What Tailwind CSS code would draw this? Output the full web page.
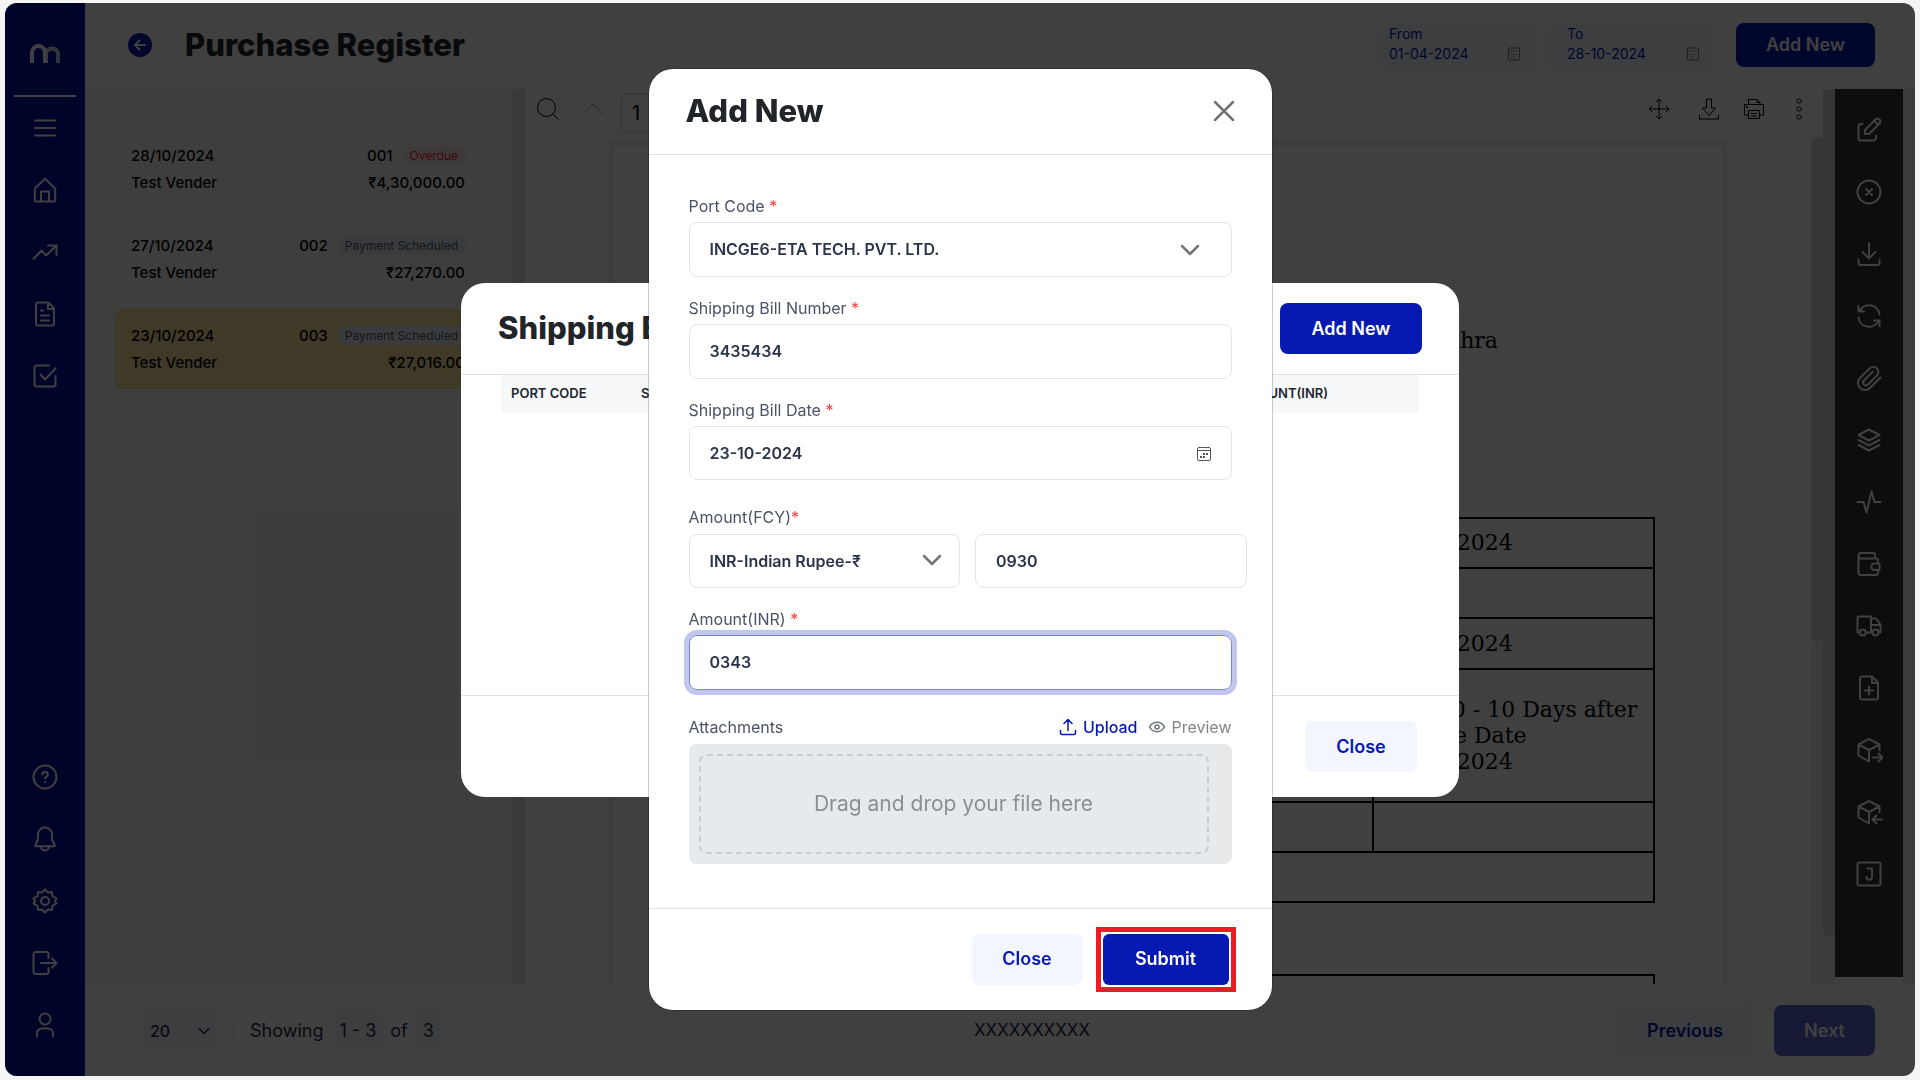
<!DOCTYPE html>
<html lang="en">
  <head>
    <meta charset="UTF-8" />
    <meta name="viewport" content="width=device-width, initial-scale=1.0" />
    <title>Purchase Register</title>
    <script src="https://cdn.jsdelivr.net/npm/@tailwindcss/browser@4"></script>
  </head>
  <body class="h-screen overflow-hidden bg-[#f5f5f6] px-[5px] pt-[3px] pb-1 font-['Inter',sans-serif] text-[#212529]">
    <!-- App -->
    <div class="relative flex h-full overflow-hidden rounded-xl bg-white">
      <!-- Left navigation -->
      <nav class="flex w-20 shrink-0 flex-col items-center bg-[#0010a0] pb-5 text-white">
        <a href="#" aria-label="Dashboard" class="flex h-[92px] items-center pt-2">
          <svg class="h-5 w-8" viewBox="0 0 32 20" fill="none" stroke-width="4">
            <path stroke="#c4d2e8" d="M17 20V9.5a6.5 6.5 0 0 1 12 0V20" />
            <path stroke="currentColor" d="M3 20V9.5a6.5 6.5 0 0 1 13 0V20" />
          </svg>
        </a>
        <div class="h-0.5 w-[62px] shrink-0 bg-white"></div>
        <a href="#" aria-label="Menu" class="flex h-[62px] items-center">
          <svg class="size-7" viewBox="0 0 28 28" fill="none" stroke="currentColor" stroke-width="2" stroke-linecap="round"><path d="M4 6.500h20M4 14h20M4 21.500h20" /></svg>
        </a>
        <a href="#" aria-label="Home" class="flex h-[62px] items-center">
          <svg class="size-7" viewBox="0 0 28 28" fill="none" stroke="currentColor" stroke-width="2" stroke-linecap="round" stroke-linejoin="round"><path d="M3.800 12.500 14 2.800l10.200 9.700V24a1.500 1.500 0 0 1-1.500 1.500H5.300A1.500 1.500 0 0 1 3.800 24Z" /><path d="M10 25v-9.500h8V25" /></svg>
        </a>
        <a href="#" aria-label="Sales" class="flex h-[62px] items-center">
          <svg class="size-7" viewBox="0 0 28 28" fill="none" stroke="currentColor" stroke-width="2" stroke-linecap="round" stroke-linejoin="round"><path d="m2.500 21 8-8.500 4.500 5L25.500 7.500M17 7.500h8.500V17" /></svg>
        </a>
        <a href="#" aria-label="Documents" class="flex h-[62px] items-center">
          <svg class="size-7" viewBox="0 0 28 28" fill="none" stroke="currentColor" stroke-width="2" stroke-linecap="round" stroke-linejoin="round"><path d="M17.500 2.500H7A2 2 0 0 0 5 4.500v19a2 2 0 0 0 2 2h14a2 2 0 0 0 2-2V8.500ZM17 3v6h6M10 10.500h2M10 15.500h8M10 20.500h8" /></svg>
        </a>
        <a href="#" aria-label="Tasks" class="flex h-[62px] items-center">
          <svg class="size-7" viewBox="0 0 28 28" fill="none" stroke="currentColor" stroke-width="2" stroke-linecap="round" stroke-linejoin="round"><path d="M18 3.500H5.500a2 2 0 0 0-2 2v17a2 2 0 0 0 2 2h17a2 2 0 0 0 2-2V14M9.500 12.500l4.500 5L24.500 6.500" /></svg>
        </a>
        <a href="#" aria-label="Help" class="mt-auto flex h-[62px] items-center">
          <svg class="size-7" viewBox="0 0 28 28" fill="none" stroke="currentColor" stroke-width="2" stroke-linecap="round" stroke-linejoin="round"><circle cx="14" cy="14" r="11.500" /><path d="M11.300 11.500c.2-3.400 5.600-3.200 5.500.2 0 2-2.600 1.900-2.700 4M14 19v.3" /></svg>
        </a>
        <a href="#" aria-label="Notifications" class="flex h-[62px] items-center">
          <svg class="size-7" viewBox="0 0 28 28" fill="none" stroke="currentColor" stroke-width="2" stroke-linecap="round" stroke-linejoin="round"><path d="M14 2.500a7 7 0 0 0-7 7.200v5.100l-2.800 5.400c-.3.600 0 1 .6 1h18.400c.6 0 .9-.4.600-1L21 14.800V9.700a7 7 0 0 0-7-7.200ZM10 21.500a4 4 0 0 0 8 0" /></svg>
        </a>
        <a href="#" aria-label="Settings" class="flex h-[62px] items-center">
          <svg class="size-7" viewBox="0 0 28 28" fill="none" stroke="currentColor" stroke-width="2" stroke-linejoin="round"><path d="m14 2.500 2.900 3 4.100-.500.500 4.100 4 2.400-1.700 2.500 1.700 2.500-4 2.400-.5 4.100-4.100-.5-2.900 3-2.900-3-4.100.5-.5-4.100-4-2.400L4.200 14l-1.700-2.500 4-2.400.5-4.100 4.100.5Z" /><circle cx="14" cy="14" r="4" /></svg>
        </a>
        <a href="#" aria-label="Log out" class="flex h-[62px] items-center">
          <svg class="size-7" viewBox="0 0 28 28" fill="none" stroke="currentColor" stroke-width="2" stroke-linecap="round" stroke-linejoin="round"><path d="M17.500 9V5a2 2 0 0 0-2-2h-11a2 2 0 0 0-2 2v18a2 2 0 0 0 2 2h11a2 2 0 0 0 2-2v-4M10 14h15.500M21 9.500l4.500 4.500-4.500 4.500" /></svg>
        </a>
        <a href="#" aria-label="Profile" class="flex h-[62px] items-center">
          <svg class="size-7" viewBox="0 0 28 28" fill="none" stroke="currentColor" stroke-width="2" stroke-linecap="round"><circle cx="14" cy="8" r="5.500" /><path d="M6 25.500v-3a5 5 0 0 1 5-5h6a5 5 0 0 1 5 5v3" /></svg>
        </a>
      </nav>

      <div class="flex min-w-0 flex-1 flex-col">
        <!-- Header -->
        <header class="flex h-[86px] shrink-0 items-center pr-10 pb-0.5 pl-[43px]">
          <button aria-label="Back" class="flex size-6 items-center justify-center rounded-full bg-[#0619b1] text-white">
            <svg class="size-4" viewBox="0 0 16 16" fill="none" stroke="currentColor" stroke-width="2" stroke-linecap="round" stroke-linejoin="round"><path d="M13 8H3m4.500-4.500L3 8l4.500 4.500" /></svg>
          </button>
          <div class="ml-3 h-5 w-px bg-[#f0f0f0]"></div>
          <h1 class="ml-5 text-[31px] font-extrabold">Purchase Register</h1>
          <div class="ml-auto flex items-center">
            <label class="flex h-[42px] w-[158px] flex-col justify-center rounded bg-[#f4f7ff] pr-4 pb-0.5 pl-[10px] text-sm leading-5 text-[#0619b1]">
              From
              <span class="flex items-center justify-between">
                <input value="01-04-2024" class="w-24" />
                <svg class="size-3.5 text-neutral-500" viewBox="0 0 14 14" fill="none" stroke="currentColor"><rect x="1.500" y="1" width="11" height="12" rx="1" /><path d="M1.500 4h11M4 7.500h6M4 10h4" stroke-dasharray="1.500 1" /></svg>
              </span>
            </label>
            <label class="ml-2.5 flex h-[42px] w-[169px] flex-col justify-center rounded bg-[#f4f7ff] pr-4 pb-0.5 pl-5 text-sm leading-5 text-[#0619b1]">
              To
              <span class="flex items-center justify-between">
                <input value="28-10-2024" class="w-24" />
                <svg class="size-3.5 text-neutral-500" viewBox="0 0 14 14" fill="none" stroke="currentColor"><rect x="1.500" y="1" width="11" height="12" rx="1" /><path d="M1.500 4h11M4 7.500h6M4 10h4" stroke-dasharray="1.500 1" /></svg>
              </span>
            </label>
            <button class="ml-5 h-11 w-[139px] rounded-lg bg-[#0619b1] text-lg font-semibold text-white">Add New</button>
          </div>
        </header>

        <div class="flex min-h-0 flex-1">
          <!-- Purchase list -->
          <aside class="w-[427px] shrink-0 bg-[#f5f5fb] pt-[35px] pl-[30px] text-[15px] font-medium text-black">
            <ul class="w-[366px]">
              <li class="h-[90px] border-b border-[#efeff3] px-4 pt-[18px] leading-[27px]">
                <div class="flex items-center"><span>28/10/2024</span><span class="ml-auto">001</span><span class="ml-2.5 rounded-lg bg-[#fbe6e6] px-[7px] text-xs leading-[19px] font-normal text-[#ff1d1d]">Overdue</span></div>
                <div class="flex justify-between"><span>Test Vender</span><span>₹4,30,000.00</span></div>
              </li>
              <li class="h-[90px] border-b border-[#efeff3] px-4 pt-[18px] leading-[27px]">
                <div class="flex items-center"><span>27/10/2024</span><span class="ml-auto">002</span><span class="ml-2.5 rounded-lg bg-[#e4ebf0] px-[7px] text-xs leading-[19px] font-normal text-[#4f5b70]">Payment Scheduled</span></div>
                <div class="flex justify-between"><span>Test Vender</span><span>₹27,270.00</span></div>
              </li>
              <li class="h-[90px] border-b border-[#efeff3] py-1 leading-[27px]">
                <div class="h-[81px] rounded-lg bg-[#f9e29c] px-4 pt-3.5">
                  <div class="flex items-center"><span>23/10/2024</span><span class="ml-auto">003</span><span class="ml-2.5 rounded-lg bg-[#e4ebf0] px-[7px] text-xs leading-[19px] font-normal text-[#4f5b70]">Payment Scheduled</span></div>
                  <div class="flex justify-between"><span>Test Vender</span><span>₹27,016.00</span></div>
                </div>
              </li>
            </ul>
          </aside>
          <div class="w-[13px] shrink-0 bg-[#e8e8e8]"></div>

          <!-- Document viewer -->
          <main class="flex min-w-0 flex-1 flex-col overflow-hidden">
            <div class="flex h-12 shrink-0 items-center pl-[11px] text-black">
              <svg class="mb-2 size-6" viewBox="0 0 24 24" fill="none" stroke="currentColor"><circle cx="10.500" cy="10.500" r="9" /><path d="m17 17 5.500 5.500" /></svg>
              <svg class="mb-2 ml-[21px] size-6 text-neutral-400" viewBox="0 0 24 24" fill="none" stroke="currentColor"><path d="m2 17 10-10 10 10" /></svg>
              <input aria-label="Page" value="1" class="ml-4 h-10 w-14 rounded border border-neutral-300 px-2.5 text-xl" />
              <div class="mb-2 ml-auto flex items-center">
                <svg class="size-6" viewBox="0 0 24 24" fill="none" stroke="currentColor"><path d="M12 2v20M2 12h20M9 5l3-3 3 3M9 19l3 3 3-3M5 9l-3 3 3 3M19 9l3 3-3 3" /></svg>
                <svg class="ml-[26px] size-6" viewBox="0 0 24 24" fill="none" stroke="currentColor"><path d="M2.500 18v4h19v-4M9.500 2h5v9h4L12 18.500 5.500 11h4Z" /></svg>
                <svg class="ml-[21px] size-6" viewBox="0 0 24 24" fill="none" stroke="currentColor"><path d="M6.500 7.500v-5H15l3 3v2M6.500 18h-4V7.500h19V18h-4M6.500 13.500h11v8h-11ZM9 16.500h6M9 19h6M15 2.500v3h3" /><path fill="currentColor" d="M4.500 9.500h1v1h-1z" /></svg>
                <svg class="ml-[21px] size-6" viewBox="0 0 24 24" fill="none" stroke="currentColor"><rect x="10" y="2" width="4" height="4" rx="1.500" /><rect x="10" y="10" width="4" height="4" rx="1.500" /><rect x="10" y="18" width="4" height="4" rx="1.500" /></svg>
              </div>
            </div>
            <div class="flex min-h-0 flex-1 overflow-hidden pt-2">
              <div class="mr-[88px] ml-[88px] flex-1 px-[68px] pt-[183px] font-['DejaVu_Serif',serif] text-[22px] leading-[26px] text-black shadow-[0_0_5px_3px_rgba(0,0,0,0.12)]">
                <p class="pr-[157px] text-right">Andhra</p>
                <table class="mt-[163px] w-full table-fixed border-collapse border-2 border-black">
                  <colgroup><col /><col class="w-[281px]" /></colgroup>
                  <tr class="h-[50px] border-b-2"><td></td><td class="border-l-2 px-3">23-10-2024</td></tr>
                  <tr class="h-[50px] border-b-2"><td></td><td class="border-l-2"></td></tr>
                  <tr class="h-[51px] border-b-2"><td></td><td class="border-l-2 px-3">23-10-2024</td></tr>
                  <tr class="h-[133px] border-b-2"><td></td><td class="border-l-2 px-3 whitespace-nowrap">Due 30 - 10 Days after<br />Invoice Date<br />23-10-2024</td></tr>
                  <tr class="h-[50px] border-b-2"><td></td><td class="border-l-2"></td></tr>
                  <tr class="h-[50px]"><td colspan="2"></td></tr>
                </table>
                <div class="mt-[71px] h-20 border-2 border-black"></div>
              </div>
            </div>
          </main>

          <!-- Scroll tracks -->
          <div class="w-3 shrink-0 pt-12"><div class="h-full bg-[#f0f0f0]"><div class="h-[505px] rounded-full bg-[#d8d8d8]"></div></div></div>
          <div class="w-3 shrink-0 bg-[#efefef]"><div class="h-[848px] rounded-full bg-[#d4d4d4]"></div></div>

          <!-- Document actions -->
          <div class="mb-[7px] flex w-[68px] shrink-0 flex-col items-center bg-[#303438] pt-[10px] text-white">
            <button aria-label="Edit" class="flex h-[62px] items-center"><svg class="size-7" viewBox="0 0 28 28" fill="none" stroke="currentColor" stroke-width="2" stroke-linecap="round" stroke-linejoin="round"><path d="M7.500 8H6a2.500 2.500 0 0 0-2.500 2.500V22A2.500 2.500 0 0 0 6 24.500h12.500A2.500 2.500 0 0 0 21 22v-2.500M10 14 20.500 3.500a2.500 2.500 0 0 1 4 4L14 18H10ZM19.500 5l3.500 3.500" /></svg></button>
            <button aria-label="Cancel" class="flex h-[62px] items-center"><svg class="size-7" viewBox="0 0 28 28" fill="none" stroke="currentColor" stroke-width="2" stroke-linecap="round"><circle cx="14" cy="14" r="11.500" /><path d="m11 11 6 6m0-6-6 6" /></svg></button>
            <button aria-label="Download" class="flex h-[62px] items-center"><svg class="size-7" viewBox="0 0 28 28" fill="none" stroke="currentColor" stroke-width="2" stroke-linecap="round" stroke-linejoin="round"><path d="M14 3v15.500M7.500 12l6.500 6.500 6.500-6.500M3.500 19.500V23a2 2 0 0 0 2 2h17a2 2 0 0 0 2-2v-3.500" /></svg></button>
            <button aria-label="Refresh" class="flex h-[62px] items-center"><svg class="size-7" viewBox="0 0 28 28" fill="none" stroke="currentColor" stroke-width="2" stroke-linecap="round" stroke-linejoin="round"><path d="M24.500 12.500A10.500 10.500 0 0 0 5 8.500M3.500 4v5.500H9M3.500 15.500A10.500 10.500 0 0 0 23 19.500M24.500 24v-5.500H19" /></svg></button>
            <button aria-label="Attach" class="flex h-[62px] items-center"><svg class="size-7" viewBox="0 0 28 28" fill="none" stroke="currentColor" stroke-width="2" stroke-linecap="round" stroke-linejoin="round"><path d="M25.500 13.500 15 24a7 7 0 0 1-10-10L14.500 4.500a5 5 0 0 1 7.500 7L13 20.500a2.700 2.700 0 0 1-4-4l8.500-8.500" /></svg></button>
            <button aria-label="Layers" class="flex h-[62px] items-center"><svg class="size-7" viewBox="0 0 28 28" fill="none" stroke="currentColor" stroke-width="2" stroke-linecap="round" stroke-linejoin="round"><path d="m14 3.500 10.500 5.500L14 14.500 3.500 9ZM3.500 14 14 19.500 24.500 14M3.500 19 14 24.500 24.500 19" /></svg></button>
            <button aria-label="Activity" class="flex h-[62px] items-center"><svg class="size-7" viewBox="0 0 28 28" fill="none" stroke="currentColor" stroke-width="2" stroke-linecap="round" stroke-linejoin="round"><path d="M2.500 14h6l3 10.500 5-21 3 10.500h6" /></svg></button>
            <button aria-label="Payments" class="flex h-[62px] items-center"><svg class="size-7" viewBox="0 0 28 28" fill="none" stroke="currentColor" stroke-width="2" stroke-linecap="round" stroke-linejoin="round"><path d="M20 8.500V5a2 2 0 0 0-2-2H6a2.500 2.500 0 0 0-2.500 2.500v17A2.500 2.500 0 0 0 6 25h15a2 2 0 0 0 2-2v-3M4 6.500a2 2 0 0 0 2 2h15a2 2 0 0 1 2 2v3M24.500 13.500h-5a3.200 3.200 0 0 0 0 6.500h5Z" /></svg></button>
            <button aria-label="Delivery" class="flex h-[62px] items-center"><svg class="size-7" viewBox="0 0 28 28" fill="none" stroke="currentColor" stroke-width="2" stroke-linecap="round" stroke-linejoin="round"><path d="M4.500 20.500h-2V6a1.500 1.500 0 0 1 1.500-1.500h12v16H11M16 6.500h5l4.500 6v8H24M16 13h9M17.500 20.500H16" /><circle cx="7.800" cy="20.500" r="3" /><circle cx="20.500" cy="20.500" r="3" /></svg></button>
            <button aria-label="Add file" class="flex h-[62px] items-center"><svg class="size-7" viewBox="0 0 28 28" fill="none" stroke="currentColor" stroke-width="2" stroke-linecap="round" stroke-linejoin="round"><path d="M17 2.500H7A2 2 0 0 0 5 4.500v19a2 2 0 0 0 2 2h14a2 2 0 0 0 2-2V8.500ZM17 3v6h6M14 12.500v8M10 16.500h8" /></svg></button>
            <button aria-label="Goods out" class="flex h-[62px] items-center"><svg class="size-7" viewBox="0 0 28 28" fill="none" stroke="currentColor" stroke-width="2" stroke-linecap="round" stroke-linejoin="round"><path d="M24.500 14.500V8.500L14 3 3.500 8.500v11L14 25.500v-11.500M3.500 8.500 14 14l10.500-5.500M18 21.500h9M23.500 17.500l4 4-4 4" /></svg></button>
            <button aria-label="Goods in" class="flex h-[62px] items-center"><svg class="size-7" viewBox="0 0 28 28" fill="none" stroke="currentColor" stroke-width="2" stroke-linecap="round" stroke-linejoin="round"><path d="M24.500 14.500V8.500L14 3 3.500 8.500v11L14 25.500v-11.500M3.500 8.500 14 14l10.500-5.500M18 21.500h9M21.500 17.500l-4 4 4 4" /></svg></button>
            <button aria-label="Journal" class="flex h-[62px] items-center"><svg class="size-7" viewBox="0 0 28 28" fill="none" stroke="currentColor" stroke-width="2" stroke-linecap="round" stroke-linejoin="round"><rect x="2.500" y="2.500" width="23" height="23" rx="2" /><path d="M12.500 8.500H17V17a2.700 2.700 0 0 1-5.500 0" /></svg></button>
          </div>
          <div class="w-3 shrink-0 bg-[#ececec]"></div>
        </div>

        <!-- Footer -->
        <footer class="grid h-[92px] shrink-0 grid-cols-3 items-center border-t border-[#f4f4f4] pr-10 pl-14 text-lg text-[#1f2a44]">
          <div class="flex items-center">
            <div class="relative">
              <select aria-label="Rows per page" class="h-[34px] w-[76px] appearance-none rounded bg-[#f4f7ff] pl-[9px] text-base font-medium"><option>20</option></select>
              <svg class="pointer-events-none absolute top-2.5 right-1.5 size-3.5" viewBox="0 0 14 14" fill="none" stroke="currentColor" stroke-width="1.500"><path d="m2 4.500 5 5 5-5" /></svg>
            </div>
            <div class="ml-4 h-6 w-px bg-[#dddddd]"></div>
            <span class="ml-4">Showing</span>
            <span class="ml-2.5 rounded bg-[#f4f7ff] px-1.5 leading-[34px]">1 - 3</span>
            <span class="ml-2">of</span>
            <span class="ml-2 rounded bg-[#f4f7ff] px-[7px] leading-[34px]">3</span>
          </div>
          <p class="pl-12 text-center text-[17px]">XXXXXXXXXX</p>
          <div class="flex justify-end gap-5 text-lg font-semibold">
            <button class="h-[51px] w-[138px] rounded-lg bg-[#f4f7ff] text-[#0619b1]">Previous</button>
            <button class="h-[51px] w-[101px] rounded-lg bg-[#5c68d4] text-white">Next</button>
          </div>
        </footer>
      </div>

      <div class="absolute inset-0 bg-black/75"></div>
    </div>

    <!-- Shipping bill dialog -->
    <div class="fixed inset-0 flex items-center justify-center">
      <section role="dialog" aria-label="Shipping Bill" class="flex h-[514px] w-[998px] flex-col rounded-3xl bg-white">
        <div class="flex h-[92px] shrink-0 items-center justify-between border-b border-[#dee2e6] px-[37px]">
          <h2 class="text-[31px] font-extrabold">Shipping Bill</h2>
          <button class="h-[51px] w-[142px] rounded-lg bg-[#0619b1] text-lg font-semibold text-white">Add New</button>
        </div>
        <div class="flex-1 px-10">
          <table class="w-full table-fixed bg-[#f7f8fa] text-left text-[13px] font-semibold">
            <thead>
              <tr class="h-[38px]">
                <th class="w-[130px] pl-2.5 font-semibold">PORT CODE</th>
                <th class="pl-2.5 font-semibold">SHIPPING BILL NO</th>
                <th class="pl-2.5 font-semibold">DATE</th>
                <th class="w-[182px] font-semibold">AMOUNT(INR)</th>
              </tr>
            </thead>
          </table>
        </div>
        <div class="flex h-[102px] shrink-0 items-center justify-end border-t border-[#dee2e6] pr-[42px]">
          <button class="h-[51px] w-28 rounded-lg bg-[#f3f6ff] text-lg font-semibold text-[#0619b1]">Close</button>
        </div>
      </section>
    </div>

    <!-- Add new dialog -->
    <div class="fixed inset-0 flex items-center justify-center pb-0.5">
      <form role="dialog" aria-label="Add New" class="flex w-[623px] flex-col rounded-3xl bg-white shadow-[0_0_0_1px_rgba(0,0,0,0.2)]">
        <div class="flex h-[86px] items-center justify-between border-b border-[#dee2e6] pr-9 pl-[37px]">
          <h2 class="text-[31px] font-extrabold">Add New</h2>
          <button type="button" aria-label="Close dialog" class="text-[#757575]">
            <svg class="size-6" viewBox="0 0 24 24" fill="none" stroke="currentColor" stroke-width="2.500" stroke-linecap="round"><path d="m3 3 18 18M21 3 3 21" /></svg>
          </button>
        </div>

        <div class="h-[753px] px-10 pt-10 text-base text-[#4b5368]">
          <label for="port" class="block leading-[22px]">Port Code <span class="text-[#ff3b3b]">*</span></label>
          <div class="relative mt-[5px]">
            <select id="port" class="h-[55px] w-full appearance-none rounded-lg border border-[#e4e5e7] px-5 font-semibold text-[#2b3448]"><option>INCGE6-ETA TECH. PVT. LTD.</option></select>
            <svg class="pointer-events-none absolute top-[18px] right-8 size-5 text-[#757575]" viewBox="0 0 20 20" fill="none" stroke="currentColor" stroke-width="2.500" stroke-linecap="round" stroke-linejoin="round"><path d="m2 6 8 8 8-8" /></svg>
          </div>

          <label for="bill-no" class="mt-5 block leading-[22px]">Shipping Bill Number <span class="text-[#ff3b3b]">*</span></label>
          <input id="bill-no" value="3435434" class="mt-[5px] h-[55px] w-full rounded-lg border border-[#e4e5e7] px-5 font-semibold text-[#2b3448]" />

          <label for="bill-date" class="mt-5 block leading-[22px]">Shipping Bill Date <span class="text-[#ff3b3b]">*</span></label>
          <div class="relative mt-[5px]">
            <input id="bill-date" value="23-10-2024" class="h-[54px] w-full rounded-lg border border-[#e4e5e7] px-5 font-semibold text-[#2b3448]" />
            <svg class="pointer-events-none absolute top-5 right-5 size-4 text-[#555]" viewBox="0 0 16 16" fill="none" stroke="currentColor"><rect x="1.500" y="1.500" width="13" height="13" rx="1.500" /><path d="M1.500 4.500h13" /><path stroke-width="2" stroke-dasharray="2 1" d="M7 8h5M4 11h5" /></svg>
          </div>

          <label for="fcy" class="mt-[26px] block leading-[22px]">Amount(FCY)<span class="text-[#ff3b3b]">*</span></label>
          <div class="-mr-[15px] mt-1.5 grid grid-cols-2 gap-[15px]">
            <div class="relative">
              <select aria-label="Currency" class="h-[54px] w-full appearance-none rounded-lg border border-[#e4e5e7] px-5 font-semibold text-[#2b3448]"><option>INR-Indian Rupee-₹</option></select>
              <svg class="pointer-events-none absolute top-4 right-[18px] size-5 text-[#757575]" viewBox="0 0 20 20" fill="none" stroke="currentColor" stroke-width="2.500" stroke-linecap="round" stroke-linejoin="round"><path d="m2 6 8 8 8-8" /></svg>
            </div>
            <input id="fcy" value="0930" class="h-[54px] w-full rounded-lg border border-[#e4e5e7] px-5 font-semibold text-[#2b3448]" />
          </div>

          <label for="inr" class="mt-5 block leading-[22px]">Amount(INR) <span class="text-[#ff3b3b]">*</span></label>
          <input id="inr" value="0343" class="mt-[5px] h-[55px] w-full rounded-lg border border-[#7885d8] px-5 font-semibold text-[#2b3448] ring-5 ring-[#c1c6ec]" />

          <div class="mt-5 flex h-[34px] items-center">
            <label for="file">Attachments</label>
            <button type="button" class="ml-auto flex items-center gap-1.5 font-medium text-[#0619b1]">
              <svg class="size-[18px]" viewBox="0 0 18 18" fill="none" stroke="currentColor" stroke-width="1.500" stroke-linecap="round" stroke-linejoin="round"><path d="M9 12.500V2M5 5.500 9 1.500l4 4M1.500 12.500V15A1.500 1.500 0 0 0 3 16.500h12a1.500 1.500 0 0 0 1.500-1.500v-2.500" /></svg>
              Upload
            </button>
            <button type="button" class="ml-2.5 flex items-center gap-1.5 text-[#868686]">
              <svg class="size-[18px]" viewBox="0 0 18 18" fill="none" stroke="#6c757d" stroke-width="1.500"><path d="M1.500 9C5 2.800 13 2.800 16.500 9 13 15.200 5 15.200 1.500 9Z" /><circle cx="9" cy="9" r="2" /></svg>
              Preview
            </button>
          </div>
          <div class="h-[120px] rounded-lg bg-[#e9e9e9] pr-[13px]">
            <label class="flex h-full rounded-l-lg bg-[#e7eaed] p-2.5 text-[21px] text-[#8b8f93]">
              <span class="flex flex-1 items-center justify-center rounded-lg border-2 border-dashed border-[#c9cdd0]">Drag and drop your file here</span>
              <input id="file" type="file" class="sr-only" />
            </label>
          </div>
        </div>

        <div class="flex h-[102px] items-center justify-end gap-[13px] border-t border-[#dee2e6] pr-9 text-lg font-semibold">
          <button type="button" class="h-[51px] w-[111px] rounded-lg bg-[#f3f6ff] text-[#0619b1]">Close</button>
          <div class="border-5 border-[#ed1c24] p-0.5">
            <button class="h-[51px] w-[126px] rounded-md bg-[#0619b1] text-white">Submit</button>
          </div>
        </div>
      </form>
    </div>
  </body>
</html>
